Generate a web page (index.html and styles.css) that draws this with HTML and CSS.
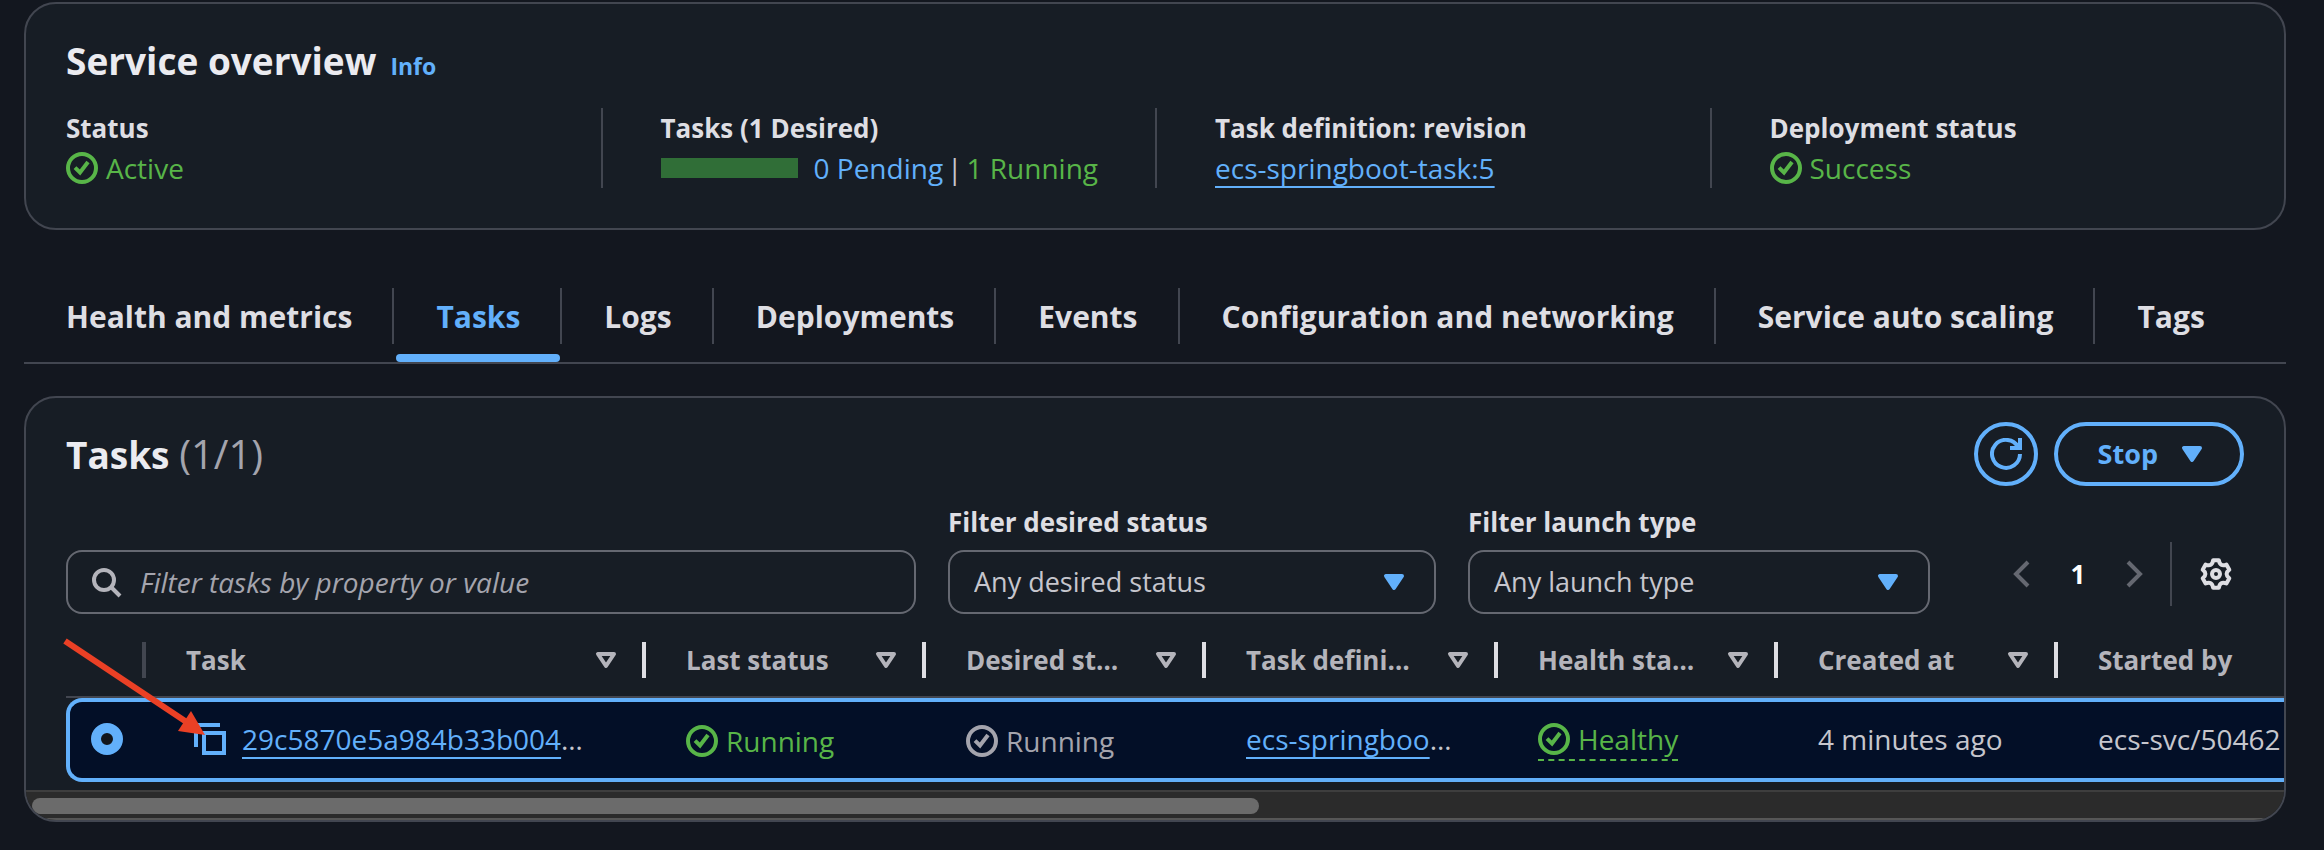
FILE: index.html
```html
<!DOCTYPE html>
<html lang="en">
<head>
<meta charset="utf-8">
<title>Service overview</title>
<link rel="stylesheet" href="styles.css">
</head>
<body>
<svg class="sprite" aria-hidden="true">
  <symbol id="i-check" viewBox="0 0 16 16"><circle cx="8" cy="8" r="7"/><path d="m4.5 7.8 2.5 2.4L11 5"/></symbol>
  <symbol id="i-refresh" viewBox="0 0 16 16"><path d="M10 5h5V0"/><path d="M15 8a7 7 0 1 1-.9-3.500"/></symbol>
  <symbol id="i-search" viewBox="0 0 16 16"><circle cx="7" cy="7" r="5"/><path d="m15 15-4.5-4.5"/></symbol>
  <symbol id="i-caret" viewBox="0 0 16 16"><path d="M4 5h8l-4 6z"/></symbol>
  <symbol id="i-left" viewBox="0 0 16 16"><path d="M11 2 5 8l6 6"/></symbol>
  <symbol id="i-right" viewBox="0 0 16 16"><path d="m5 2 6 6-6 6"/></symbol>
  <symbol id="i-copy" viewBox="0 0 16 16"><path d="M15 5H5v10h10V5Z"/><path d="M13 1H1v11"/></symbol>
  <symbol id="i-gear" viewBox="0 0 16 16"><path stroke-linejoin="round" d="M6.55 1.1h2.9Q9.97 4.6 13.2 3.3L14.66 5.84Q11.94 8 14.66 10.16L13.2 12.7Q9.97 11.4 9.45 14.9H6.55Q6.03 11.4 2.8 12.7L1.34 10.16Q4.06 8 1.34 5.84L2.8 3.3Q6.03 4.6 6.55 1.1Z"/><circle cx="8" cy="8" r="2"/></symbol>
</svg>

<main class="page">
  <section class="panel">
    <header class="panel-head">
      <h2>Service overview</h2>
      <a class="info" href="#info">Info</a>
    </header>
    <dl class="facts">
      <div class="fact">
        <dt>Status</dt>
        <dd class="status ok"><svg class="icon"><use href="#i-check"/></svg>Active</dd>
      </div>
      <div class="fact">
        <dt>Tasks (1 Desired)</dt>
        <dd class="counts"><span class="meter"></span><span class="pending">0 Pending</span><span>|</span><span class="ok">1 Running</span></dd>
      </div>
      <div class="fact">
        <dt>Task definition: revision</dt>
        <dd><a class="link" href="#definition">ecs-springboot-task:5</a></dd>
      </div>
      <div class="fact">
        <dt>Deployment status</dt>
        <dd class="status ok"><svg class="icon"><use href="#i-check"/></svg>Success</dd>
      </div>
    </dl>
  </section>

  <nav class="tabs" role="tablist">
    <button class="tab" role="tab">Health and metrics</button>
    <button class="tab active" role="tab" aria-selected="true">Tasks</button>
    <button class="tab" role="tab">Logs</button>
    <button class="tab" role="tab">Deployments</button>
    <button class="tab" role="tab">Events</button>
    <button class="tab" role="tab">Configuration and networking</button>
    <button class="tab" role="tab">Service auto scaling</button>
    <button class="tab" role="tab">Tags</button>
  </nav>

  <section class="panel tasks">
    <header class="tasks-head">
      <h2>Tasks <span class="count">(1/1)</span></h2>
      <div class="actions">
        <button class="btn round" aria-label="Refresh"><svg class="icon"><use href="#i-refresh"/></svg></button>
        <button class="btn stop">Stop<svg class="icon caret"><use href="#i-caret"/></svg></button>
      </div>
    </header>

    <div class="filters">
      <div class="search">
        <svg class="icon"><use href="#i-search"/></svg>
        <input type="text" aria-label="Filter tasks" placeholder="Filter tasks by property or value">
      </div>
      <div class="field desired">
        <label for="desired">Filter desired status</label>
        <div class="select">
          <select id="desired"><option>Any desired status</option></select>
          <svg class="icon caret"><use href="#i-caret"/></svg>
        </div>
      </div>
      <div class="field launch">
        <label for="launch">Filter launch type</label>
        <div class="select">
          <select id="launch"><option>Any launch type</option></select>
          <svg class="icon caret"><use href="#i-caret"/></svg>
        </div>
      </div>
      <div class="pager">
        <button class="plain" aria-label="Previous page"><svg class="icon"><use href="#i-left"/></svg></button>
        <button class="plain current">1</button>
        <button class="plain" aria-label="Next page"><svg class="icon"><use href="#i-right"/></svg></button>
        <button class="plain settings" aria-label="Preferences"><svg class="icon"><use href="#i-gear"/></svg></button>
      </div>
    </div>

    <div class="table-wrap">
      <table>
        <colgroup>
          <col class="c-pick"><col class="c-task"><col class="c-std"><col class="c-std"><col class="c-def"><col class="c-std"><col class="c-std"><col class="c-last">
        </colgroup>
        <thead>
          <tr>
            <th class="dim" aria-label="Selection"></th>
            <th><div class="th">Task<svg class="icon sort"><use href="#i-caret"/></svg></div></th>
            <th><div class="th">Last status<svg class="icon sort"><use href="#i-caret"/></svg></div></th>
            <th><div class="th">Desired st…<svg class="icon sort"><use href="#i-caret"/></svg></div></th>
            <th><div class="th">Task defini…<svg class="icon sort"><use href="#i-caret"/></svg></div></th>
            <th><div class="th">Health sta…<svg class="icon sort"><use href="#i-caret"/></svg></div></th>
            <th><div class="th">Created at<svg class="icon sort"><use href="#i-caret"/></svg></div></th>
            <th><div class="th">Started by</div></th>
          </tr>
        </thead>
        <tbody>
          <tr>
            <td class="pick"><input type="radio" name="task" aria-label="Select task" checked></td>
            <td><div class="cell"><button class="plain copy" aria-label="Copy"><svg class="icon"><use href="#i-copy"/></svg></button><span><a class="link" href="#task">29c5870e5a984b33b004</a>…</span></div></td>
            <td><span class="status ok"><svg class="icon"><use href="#i-check"/></svg>Running</span></td>
            <td><span class="status muted"><svg class="icon"><use href="#i-check"/></svg>Running</span></td>
            <td><a class="link" href="#definition">ecs-springboo</a>…</td>
            <td><span class="status ok dashed"><svg class="icon"><use href="#i-check"/></svg>Healthy</span></td>
            <td>4 minutes ago</td>
            <td>ecs-svc/50462</td>
          </tr>
        </tbody>
      </table>
    </div>
    <div class="scrollbar"><div class="thumb"></div></div>
    <svg class="arrow" viewBox="0 0 150 104" aria-hidden="true"><path class="shaft" d="M4 4 127 86"/><path class="tip" d="M130 74 144 98 117 94z"/></svg>
  </section>
</main>
</body>
</html>
```
FILE: styles.css
```css
:root {
  --bg: #13171f;
  --panel: #171d25;
  --line: #424650;
  --field-line: #656871;
  --text: #c6c6cd;
  --strong: #dedee3;
  --heading: #ebebf0;
  --muted: #a4a4ad;
  --blue: #62b0fb;
  --green: #58b548;
}

* {
  box-sizing: border-box;
}

body {
  margin: 0;
  background: var(--bg);
  color: var(--text);
  font: 28px/40px "Open Sans", "Noto Sans", sans-serif;
}

button,
input,
select {
  font: inherit;
  color: inherit;
}

button {
  cursor: pointer;
}

.sprite {
  position: absolute;
  width: 0;
  height: 0;
}

.icon {
  flex: none;
  width: 32px;
  height: 32px;
  fill: none;
  stroke: currentColor;
  stroke-width: 2;
}

.page {
  padding: 2px 38px 0 24px;
}

.panel {
  position: relative;
  background: var(--panel);
  border: 2px solid var(--line);
  border-radius: 32px;
  padding: 32px 40px 40px;
}

h2 {
  margin: 0;
  color: var(--heading);
  font-size: 37px;
  line-height: 50px;
  font-weight: 700;
}

.panel-head {
  display: flex;
  align-items: baseline;
  gap: 14px;
}

.info {
  color: var(--blue);
  font-size: 23px;
  line-height: 32px;
  font-weight: 700;
  text-decoration: none;
}

.facts {
  display: grid;
  grid-template-columns: repeat(4, 1fr);
  margin: 22px -20px 0;
}

.fact {
  padding-left: 58px;
  border-left: 2px solid var(--line);
}

.fact:first-child {
  padding-left: 20px;
  border-left: 0;
}

dt {
  color: var(--strong);
  font-size: 26px;
  font-weight: 700;
}

dd {
  margin: 0;
}

.status {
  display: inline-flex;
  align-items: center;
  gap: 8px;
  vertical-align: middle;
}

.fact .status {
  display: flex;
}

.ok {
  color: var(--green);
}

.muted {
  color: var(--muted);
}

.dashed {
  border-bottom: 2px dashed var(--green);
}

.counts {
  display: flex;
  align-items: center;
  gap: 4px;
}

.meter {
  width: 137px;
  height: 20px;
  margin-right: 12px;
  background: #306e37;
}

.pending,
.link {
  color: var(--blue);
}

.link {
  text-decoration: underline 2px;
  text-underline-offset: 7px;
  text-decoration-skip-ink: none;
}

.tabs {
  display: flex;
  margin-top: 58px;
  height: 76px;
  align-items: flex-start;
  border-bottom: 2px solid var(--line);
}

.tab {
  position: relative;
  height: 56px;
  padding: 2px 40px 0 42px;
  border: 0;
  border-right: 2px solid var(--line);
  background: none;
  color: var(--strong);
  font-size: 30px;
  font-weight: 700;
  white-space: nowrap;
}

.tab:last-child {
  border-right: 0;
}

.tab.active {
  color: var(--blue);
}

.tab.active::after {
  content: "";
  position: absolute;
  left: 2px;
  right: 0;
  bottom: -18px;
  height: 8px;
  border-radius: 4px;
  background: var(--blue);
}

.tasks {
  margin-top: 32px;
  padding: 24px 0 0;
  overflow: hidden;
}

.tasks-head {
  display: flex;
  align-items: center;
  justify-content: space-between;
  padding: 0 40px;
}

.count {
  color: var(--muted);
  font-size: 40px;
  font-weight: 400;
}

.actions {
  display: flex;
  gap: 16px;
}

.btn {
  display: flex;
  align-items: center;
  justify-content: center;
  gap: 18px;
  height: 64px;
  padding: 0 32px 0 40px;
  border: 4px solid var(--blue);
  border-radius: 32px;
  background: none;
  color: var(--blue);
  font-size: 27px;
  font-weight: 700;
}

.btn.round {
  width: 64px;
  padding: 0;
}

.caret {
  color: var(--blue);
  fill: currentColor;
  stroke-linejoin: round;
}

.filters {
  display: flex;
  align-items: flex-end;
  gap: 32px;
  margin-top: 16px;
  padding: 0 40px;
}

.search {
  display: flex;
  align-items: center;
  flex: 1;
  height: 64px;
  padding: 0 22px;
  gap: 18px;
  border: 2px solid var(--field-line);
  border-radius: 16px;
  color: #b4b4bb;
}

.search input {
  flex: 1;
  min-width: 0;
  padding: 0;
  border: 0;
  outline: 0;
  background: none;
}

.search input::placeholder {
  color: var(--muted);
  font-style: italic;
  opacity: 1;
}

.field label {
  display: block;
  margin-bottom: 8px;
  color: var(--strong);
  font-size: 26px;
  font-weight: 700;
}

.desired {
  flex: 0 0 488px;
}

.launch {
  flex: 0 0 462px;
}

.select {
  position: relative;
}

.select select {
  display: block;
  width: 100%;
  height: 64px;
  padding: 0 24px;
  border: 2px solid var(--field-line);
  border-radius: 16px;
  background: none;
  font-size: 27px;
  appearance: none;
}

.select .caret {
  position: absolute;
  right: 26px;
  top: 16px;
  pointer-events: none;
}

.pager {
  display: flex;
  align-items: center;
  height: 64px;
  margin: 0 0 8px 44px;
  color: var(--field-line);
}

.plain {
  display: flex;
  padding: 0;
  border: 0;
  background: none;
}

.current {
  width: 80px;
  justify-content: center;
  color: #fff;
  font-size: 26px;
  font-weight: 700;
}

.settings {
  height: 64px;
  align-items: center;
  margin-left: 20px;
  padding: 0 12px 0 28px;
  border-left: 2px solid var(--line);
  color: var(--strong);
}

.table-wrap {
  margin-top: 10px;
  padding-left: 40px;
  overflow: hidden;
}

table {
  width: 2400px;
  table-layout: fixed;
  border-collapse: separate;
  border-spacing: 0;
  white-space: nowrap;
}

.c-pick {
  width: 80px;
}

.c-task {
  width: 500px;
}

.c-std {
  width: 280px;
}

.c-def {
  width: 292px;
}

th {
  height: 74px;
  padding: 0;
  border-bottom: 2px solid var(--line);
  color: #b4b4bb;
  font-size: 26px;
  font-weight: 700;
  text-align: left;
}

.th {
  display: flex;
  align-items: center;
  justify-content: space-between;
  height: 36px;
  padding: 0 20px 0 40px;
  border-right: 4px solid var(--strong);
}

.dim::after {
  content: "";
  display: block;
  height: 36px;
  border-right: 4px solid var(--line);
}

.sort {
  stroke-linejoin: round;
}

td {
  height: 84px;
  padding: 0 0 2px 40px;
  border: solid var(--blue);
  border-width: 4px 0;
  background: #030f27;
}

td.pick {
  padding: 0 0 2px 21px;
  border-left-width: 4px;
  border-radius: 16px 0 0 16px;
}

.pick input {
  display: block;
  width: 32px;
  height: 32px;
  margin: 0;
  appearance: none;
  border: 10px solid var(--blue);
  border-radius: 50%;
  background: #12161c;
}

.cell {
  display: flex;
  align-items: center;
  gap: 16px;
  padding-left: 8px;
}

.copy {
  color: var(--blue);
}

.scrollbar {
  height: 30px;
  margin-top: 8px;
  padding: 6px 8px 0 6px;
  border-top: 2px solid #3e3e3e;
  border-bottom: 2px solid #565656;
  background: #2b2b2b;
}

.thumb {
  width: 54.7%;
  height: 16px;
  border-radius: 8px;
  background: #6b6b6b;
}

.arrow {
  position: absolute;
  left: 35px;
  top: 239px;
  width: 150px;
  height: 104px;
}

.shaft {
  fill: none;
  stroke: #ea4025;
  stroke-width: 6;
}

.tip {
  fill: #ea4025;
}
```
